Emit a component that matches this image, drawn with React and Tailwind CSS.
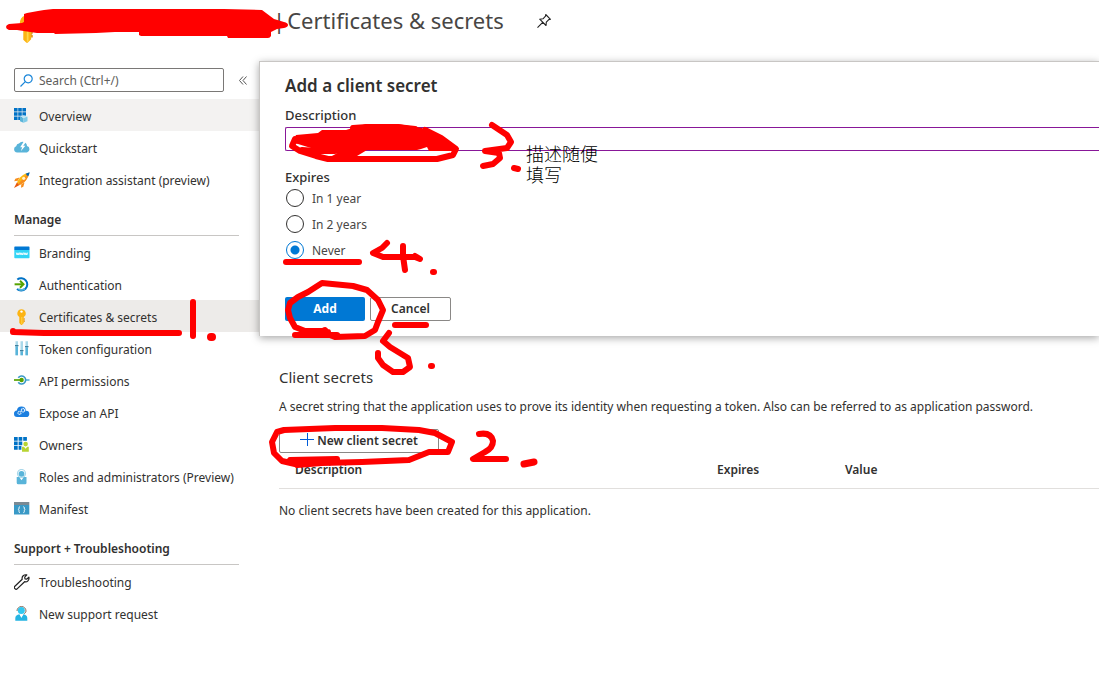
import { useState } from 'react'

const OverviewIcon = () => (
  <svg width="16" height="16" viewBox="0 0 16 16">
    <path fill="#0072c6" d="M0 0h3.600v3.600H0zM4.200 0h3.600v3.600H4.200zM8.400 0H12v3.600H8.400zM0 4.200h3.600v3.600H0zM4.200 4.200h3.600v3.600H4.200zM8.400 4.200H12v3.600H8.400zM0 8.400h3.600V12H0zM4.200 8.400h3.600V12H4.200z" />
    <path fill="#bfe6f5" d="M9.300 7.200l4 1-4 1.600-3.300-1.300z" />
    <path fill="#59b4d9" d="M6 8.700l3.500 1.300v4.700L6 13.300z" />
    <path fill="#7fcbe8" d="M9.500 10l4-1.500v4.700l-4 1.500z" />
  </svg>
)

const QuickstartIcon = () => (
  <svg width="16" height="16" viewBox="0 0 16 16">
    <path fill="#59b4d9" d="M3.200 12.500A3.200 3.200 0 0 1 .1 9.300a3 3 0 0 1 2.100-3A3.400 3.400 0 0 1 5 3.600a4.500 4.500 0 0 1 8 2.500 3.300 3.300 0 0 1 0 6.400z" />
    <path fill="#fff" d="M9.600 1.800L6.200 7.300h2l-1.400 4 4.600-5.500H9.200l3-4z" />
  </svg>
)

const RocketIcon = () => (
  <svg width="16" height="16" viewBox="0 0 16 16">
    <path fill="#f78d1e" d="M5.500 5.500L1.300 6.700.2 9.200l3.600-.4zM10.500 10.500l-1.200 4.200-2.300 1.100.3-3.600z" />
    <path fill="#e8590c" d="M3 10.300L0 15.900l5.600-2.900z" />
    <path fill="#fcb813" d="M3 10.500C5 5.500 9 2 14.900.8 14.500 6.500 10.500 11 5.500 13z" />
    <path fill="#f78d1e" d="M5.500 13C10.500 11 14.500 6.500 14.900.8L4.200 11.800z" />
    <path fill="#0063b1" d="M11.600 1.800Q13.500.8 15.700.2 15.300 2.500 14.200 4.400z" />
    <circle cx="9.700" cy="6.300" r="1.600" fill="#fff3cc" />
  </svg>
)

const BrandingIcon = () => (
  <svg width="16" height="16" viewBox="0 0 16 16">
    <path fill="#32d4f5" d="M.3 5h15.200v7.500a.7.700 0 0 1-.7.700H1a.7.700 0 0 1-.7-.7z" />
    <path fill="#0078d4" d="M1 1.500h13.800a.7.700 0 0 1 .7.700V5H.3V2.200a.7.700 0 0 1 .7-.7z" />
    <path fill="none" stroke="#fff" strokeWidth=".9" d="M2.300 7.600l.8 2.400.9-2.200.9 2.200.8-2.400M6.200 7.600L7 10l.9-2.200.9 2.200.8-2.400M10.200 7.600L11 10l.9-2.200.9 2.200.8-2.400" />
  </svg>
)

const AuthIcon = () => (
  <svg width="16" height="16" viewBox="0 0 16 16">
    <path fill="none" stroke="#0072c6" strokeWidth="2" d="M3.300 2.500A6.200 6.200 0 1 1 3 12.100" />
    <path fill="none" stroke="#59b4d9" strokeWidth="1.800" d="M4.500 12.100c2 1 4.500 1 6.300-.4" />
    <path fill="none" stroke="#57a300" strokeWidth="2" d="M.6 7.300H9" />
    <path fill="none" stroke="#57a300" strokeWidth="2" d="M6 3.800l3.500 3.500L6 10.800" />
  </svg>
)

const KeyIcon = ({ size = 16 }) => (
  <svg width={size} height={size} viewBox="0 0 16 16">
    <path fill="#fcb414" d="M7.500.2a4.300 4.300 0 0 1 2.300 7.900v5.800l-2 2h-.7l-1.800-1.800V8.100A4.300 4.300 0 0 1 7.500.2z" />
    <path fill="#ffd54a" d="M7.300 8h1v7.300h-1z" />
    <path fill="#e08c00" d="M9.800 9.300h.9v1.200l-.7.500.7.600v1.300h-.9z" />
    <circle cx="7.500" cy="2.600" r="1.200" fill="#fff" />
  </svg>
)

const TokenIcon = () => (
  <svg width="16" height="16" viewBox="0 0 16 16">
    <path fill="#a9d8ea" d="M1.500.2h2.500v14H1.500zM6.500.2H9v14H6.500zM11.500.2H14v14h-2.500z" />
    <path fill="#59b4d9" d="M1.500 5.500H4v8.700H1.500zM6.500 10.500H9v3.700H6.500zM11.500 6.500H14v7.700h-2.500z" />
    <path fill="#3f7f9c" d="M1 4h3.500v1.300H1zM6 9h3.500v1.300H6zM11 5h3.500v1.300H11z" />
  </svg>
)

const PermissionsIcon = () => (
  <svg width="16" height="16" viewBox="0 0 16 16">
    <path stroke="#59b4d9" strokeWidth="1.600" d="M11.500 7h4" />
    <path fill="none" stroke="#3999c6" strokeWidth="1.600" d="M4.300 4.800a4 4 0 1 1 0 4.400" />
    <path stroke="#57a300" strokeWidth="1.700" d="M0 7h6" />
    <circle cx="7.600" cy="7" r="2.200" fill="#57a300" />
  </svg>
)

const ExposeIcon = () => (
  <svg width="16" height="16" viewBox="0 0 16 16">
    <path fill="#1b7fe0" d="M3.300 12A3.200 3.200 0 0 1 0 8.800a3.200 3.200 0 0 1 2.900-3.200A4.600 4.600 0 0 1 7.500 1.500a4.600 4.600 0 0 1 4.500 4.200 3.200 3.200 0 0 1 3.300 3.200 3.200 3.200 0 0 1-3.300 3.100z" />
    <circle cx="5.500" cy="7.900" r="1.500" fill="none" stroke="#cfe6fb" strokeWidth="1.200" strokeDasharray="1.300 .4" />
    <circle cx="9" cy="5.200" r="1.700" fill="none" stroke="#e6f2fd" strokeWidth="1.300" strokeDasharray="1.300 .4" />
  </svg>
)

const OwnersIcon = () => (
  <svg width="16" height="16" viewBox="0 0 16 16">
    <path fill="#0072c6" d="M0 0h3.700v3.700H0zM4.600 0h3.700v3.700H4.600zM9.200 0h3.700v3.700H9.200zM0 4.500h3.700v3.700H0zM4.600 4.500h3.700v3.700H4.600zM0 9h3.700v3.700H0zM4.600 9h2.800v3.700H4.600z" />
    <circle cx="11.600" cy="7.100" r="2.300" fill="#b8d432" />
    <path fill="#b8d432" d="M8 9.800h2l1.600 2 1.600-2h1.600v4.900H8z" />
  </svg>
)

const RolesIcon = () => (
  <svg width="16" height="16" viewBox="0 0 16 16">
    <circle cx="7.500" cy="4.500" r="4" fill="none" stroke="#a9d8ea" strokeWidth="1.200" />
    <circle cx="7.500" cy="4.800" r="2.900" fill="#59b4d9" />
    <path fill="#59b4d9" d="M2.700 8h2.500l2.300 3.200L9.800 8h2.700v5.700q0 1.500-1.500 1.500H4.200q-1.500 0-1.500-1.500z" />
  </svg>
)

const ManifestIcon = () => (
  <svg width="16" height="16" viewBox="0 0 16 16">
    <path fill="#7a8a94" d="M0 1h15.300v3H0z" />
    <path fill="#3999c6" d="M0 4h15.300v9.500H0z" />
    <path fill="none" stroke="#fff" strokeWidth="1" d="M6 5.800c-1 0-1 .4-1 1.300s0 1.200-.6 1.600c.6.400.6.700.6 1.600s0 1.300 1 1.300M9.300 5.800c1 0 1 .4 1 1.300s0 1.200.6 1.600c-.6.400-.6.700-.6 1.600s0 1.300-1 1.300" />
  </svg>
)

const WrenchIcon = () => (
  <svg width="16" height="16" viewBox="0 0 16 16">
    <path fill="none" stroke="#222" strokeWidth="1.200" strokeLinejoin="round" d="M12.800.9C10 .2 7.500 2.500 8.200 5.300L.9 12.200a1.700 1.700 0 0 0 2.500 2.500l7.200-7c2.500.7 5-1.500 4.300-4.500l-2.300 2-1.600-.4-.3-1.600z" />
  </svg>
)

const SupportIcon = () => (
  <svg width="16" height="16" viewBox="0 0 16 16">
    <path fill="none" stroke="#8a6a5a" strokeWidth="1" d="M3 5A4.400 4.400 0 0 1 12 5c0 1.500-1 2.200-2 2.600" />
    <circle cx="7.300" cy="4.500" r="3.500" fill="#32c8f0" />
    <path fill="#25b4e2" d="M1.300 14.700v-3q0-2.200 2.400-3l1.700-.5 2 3 2-3 1.700.5q2.200.8 2.200 3v3z" />
    <path fill="#fff" d="M5.600 8.200h3.600L7.400 12z" />
  </svg>
)

const top = [
  { label: 'Overview', Icon: OverviewIcon, bg: 'bg-[#f3f2f1]' },
  { label: 'Quickstart', Icon: QuickstartIcon },
  { label: 'Integration assistant (preview)', Icon: RocketIcon },
]

const manage = [
  { label: 'Branding', Icon: BrandingIcon },
  { label: 'Authentication', Icon: AuthIcon },
  { label: 'Certificates & secrets', Icon: KeyIcon, bg: 'bg-[#edebe9]' },
  { label: 'Token configuration', Icon: TokenIcon },
  { label: 'API permissions', Icon: PermissionsIcon },
  { label: 'Expose an API', Icon: ExposeIcon },
  { label: 'Owners', Icon: OwnersIcon },
  { label: 'Roles and administrators (Preview)', Icon: RolesIcon },
  { label: 'Manifest', Icon: ManifestIcon },
]

const support = [
  { label: 'Troubleshooting', Icon: WrenchIcon },
  { label: 'New support request', Icon: SupportIcon },
]

function NavList({ items }) {
  return (
    <ul>
      {items.map(({ label, Icon, bg }) => (
        <li key={label}>
          <a href="#" className={`flex h-8 items-center gap-[9px] pl-3.5 whitespace-nowrap ${bg || ''}`}>
            <span className="pt-0.5"><Icon /></span>
            <span className="pt-1">{label}</span>
          </a>
        </li>
      ))}
    </ul>
  )
}

function NavHeading({ children }) {
  return (
    <h3 className="ml-3.5 mr-5 flex h-[41px] items-center border-b border-[#c8c6c4] pt-2.5 font-semibold">{children}</h3>
  )
}

// red pen marks and the note drawn over the page
function Annotations() {
  return (
    <div className="pointer-events-none absolute top-0 left-0">
      <svg width="600" height="500" viewBox="0 0 600 500" fill="none" stroke="#f00" strokeWidth="6" strokeLinecap="round" strokeLinejoin="round">
        <path fill="#f00" stroke="none" d="M24 14l3-1 11-2 6-1 9-1h171l38 1 4 3 8 6 10 3q4 1 4 3t-4 3l-7 1-6 3v4q-1 2-3 2h-40l-1-2h-86l-2-1v-3h-24l-19 1-41 1-1-1H37l-20-3H9q-3-1-3-3t3-3l13-1 2-1z" />
        <path d="M13 331v1l31 1h135" />
        <path d="M193 302v34" />
        <path d="M211 337h1" strokeWidth="8" />
        <path fill="#f00" stroke="none" d="M292 143l4-8 22-2 4-3h24l20-6h32l24 4 4 3 14 4 15 12 3 4h-29l-2-4-6 2-4 1h-50l-10 6-27 1 15-8-34-1-13-4z" />
        <path d="M425 130l16 8 15 11-3 6-16 4H328l-12-3-16-5-8-5 3-7M302 150l14 1h18l20-2M353 128l14-1h30l18 2" />
        <path d="M492 125l15 10 4 7-4 6-22 3 14 2 1 5-7 6-10 2" />
        <path d="M514 168l4 1" />
        <path d="M286 262h73" />
        <path d="M387 243l-5 5-9 5 10 4h32l5 2-5-3M403 246v10l2 14" />
        <path d="M433 272h1" />
        <path d="M295 335h42M288 310l2 8 5 9 10 4h18l2-1 5 5 5 2 30-1 10-6 3-8 5-12-5-10-11-10-14-4-31-3-14 9-10 5-8 6zM308 332h20" />
        <path d="M395 325h31" />
        <path d="M389 333l-6 8 7 6 18 11 2 9-7 5h-10l-10-7-5-7v-5" />
        <path d="M431 366h1" />
        <path d="M284 430l51-2h47l37 2 16 3 17 9-4 10h-19l-20 8-47 2-40 1-27 1-13-3-8-8-2-11 5-10zM290 460l47-1-15 4-25 2z" />
        <path d="M479 434q12-2 14 7 0 7-8 11l-12 7h33" />
        <path d="M524 464l10-2" strokeWidth="7" />
      </svg>
      <p className="absolute top-[143px] left-[526px] w-20 font-['Noto_Sans_CJK_SC',sans-serif] text-lg leading-[21px] font-light text-black">描述随便填写</p>
    </div>
  )
}

export default function App() {
  const [expires, setExpires] = useState('Never')
  const [description, setDescription] = useState('')

  return (
    <div className="relative min-h-screen overflow-x-hidden bg-white font-['Noto_Sans','Open_Sans',sans-serif] text-[12px] leading-4 text-[#323130]">
      <header className="flex h-[61px] items-start pt-1 pl-3.5">
        <div className="mt-[11px] w-[259px]">
          <KeyIcon size={28} />
        </div>
        <h1 className="flex gap-0.5 text-[22px] leading-8 whitespace-nowrap text-[#484644]">
          <span>|</span>
          <span>Certificates &amp; secrets</span>
        </h1>
        <button aria-label="Pin" className="mt-[9px] ml-8">
          <svg width="16" height="16" viewBox="0 0 16 16" fill="none" stroke="#222" strokeWidth="1.100" strokeLinejoin="round">
            <path d="M9.700 1.500l4.800 4.800-1.700.3-2.500 2.600-.3 3.300L3.700 6.200l3.300-.4 2.500-2.600zM6.700 9.400L1.500 14.600" />
          </svg>
        </button>
      </header>

      <div className="flex">
        <nav className="w-[259px] shrink-0 pt-[7px]">
          <div className="mb-[7px] flex items-center pl-3.5">
            <label className="flex h-6 w-[210px] items-center gap-1.5 rounded-xs border border-[#7a7876] pl-[5px]">
              <svg width="13" height="13" viewBox="0 0 13 13" fill="none" stroke="#1a86d9" strokeWidth="1.200">
                <circle cx="8.200" cy="4.800" r="4" />
                <path d="M5.300 7.700L.5 12.500" />
              </svg>
              <input aria-label="Search" placeholder="Search (Ctrl+/)" className="w-40 pt-0.5 outline-none placeholder:text-[#605e5c]" />
            </label>
            <button aria-label="Collapse menu" className="ml-[15px]">
              <svg width="8" height="9" viewBox="0 0 8 9" fill="none" stroke="#555" strokeWidth="1">
                <path d="M4 .5l-3.500 4L4 8.500M7.500.5L4 4.500l3.500 4" />
              </svg>
            </button>
          </div>
          <NavList items={top} />
          <NavHeading>Manage</NavHeading>
          <NavList items={manage} />
          <NavHeading>Support + Troubleshooting</NavHeading>
          <NavList items={support} />
        </nav>

        <main className="min-w-0 flex-1">
          <form onSubmit={(e) => e.preventDefault()} className="border-t border-l border-[#c8c6c4] bg-white pt-3 pb-[15px] pl-[25px] shadow-[0_2px_8px_rgba(0,0,0,0.35)]">
            <h2 className="text-[17px] leading-6 font-semibold">Add a client secret</h2>
            <label htmlFor="description" className="mt-[9px] block text-[13px] leading-4 font-medium">Description</label>
            <input id="description" value={description} onChange={(e) => setDescription(e.target.value)} className="mt-1 block h-6 w-full rounded-l-xs border border-r-0 border-[#881798] px-2 outline-none" />
            <fieldset className="mt-[18px]">
              <legend className="text-[13px] leading-4 font-medium">Expires</legend>
              {['In 1 year', 'In 2 years', 'Never'].map((opt) => (
                <label key={opt} className="flex h-[26px] items-center gap-2 pl-px">
                  <input
                    type="radio"
                    name="expires"
                    checked={expires === opt}
                    onChange={() => setExpires(opt)}
                    className="size-[18px] appearance-none rounded-full border border-[#323130] checked:border-[#0078d4] checked:bg-[radial-gradient(circle,#0078d4_4px,#fff_5px)]"
                  />
                  <span className="pt-0.5 text-[#484644]">{opt}</span>
                </label>
              ))}
            </fieldset>
            <div className="mt-[34px] flex gap-[5px]">
              <button type="submit" className="h-6 w-20 rounded-xs bg-[#0078d4] font-bold text-white">Add</button>
              <button type="button" className="h-6 w-[81px] rounded-xs border border-[#8a8886] font-semibold">Cancel</button>
            </div>
          </form>

          <section className="pt-[31px] pl-5">
            <h2 className="text-[15px] leading-5">Client secrets</h2>
            <p className="mt-3 whitespace-nowrap">A secret string that the application uses to prove its identity when requesting a token. Also can be referred to as application password.</p>
            <button className="mt-3.5 flex h-6 w-40 items-center justify-center gap-[3px] rounded-xs border border-[#8a8886] font-semibold">
              <svg width="14" height="18" viewBox="0 0 14 18" stroke="#015cda" strokeWidth="1">
                <path d="M7.500 1v13M0 7.500h14" />
              </svg>
              New client secret
            </button>
            <table className="w-full table-fixed text-left">
              <thead>
                <tr className="h-[35px] border-b border-[#e1dfdd]">
                  <th className="w-[438px] pl-4 font-semibold">Description</th>
                  <th className="w-32 font-semibold">Expires</th>
                  <th className="font-semibold">Value</th>
                </tr>
              </thead>
              <tbody>
                <tr className="h-[46px]">
                  <td colSpan={3}>No client secrets have been created for this application.</td>
                </tr>
              </tbody>
            </table>
          </section>
        </main>
      </div>

      <Annotations />
    </div>
  )
}
